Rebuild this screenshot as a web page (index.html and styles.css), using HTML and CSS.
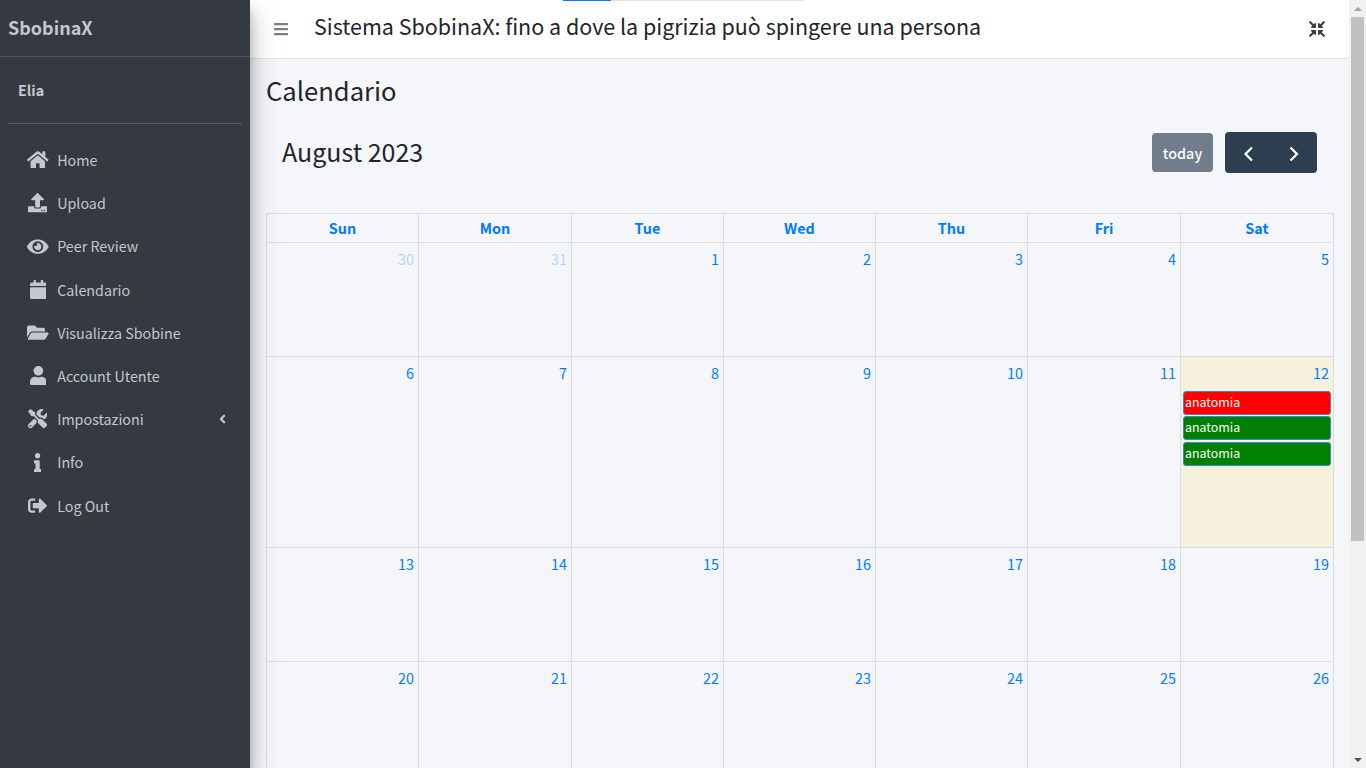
FILE: index.html
```html
<!DOCTYPE html>
<html lang="it">
<head>
    <meta charset="UTF-8">
    <title>Calendario</title>
    <link rel="stylesheet" href="styles.css">
</head>
<body>
    <div class="progress"><span class="progress-done"></span><span class="progress-rest"></span></div>

    <!-- Sidebar -->
    <aside class="sidebar">
        <div class="brand">SbobinaX</div>
        <div class="sidebar-inner">
            <div class="user-panel">Elia</div>
            <ul class="nav">
                <li><a class="nav-link"><span class="nav-icon"><svg viewBox="0 0 576 512"><path d="M280.37 148.26L96 300.11V464a16 16 0 0 0 16 16l112.06-.29a16 16 0 0 0 15.92-16V368a16 16 0 0 1 16-16h64a16 16 0 0 1 16 16v95.64a16 16 0 0 0 16 16.05L464 480a16 16 0 0 0 16-16V300L295.67 148.26a12.19 12.19 0 0 0-15.3 0zM571.6 251.47L488 182.56V44.05a12 12 0 0 0-12-12h-56a12 12 0 0 0-12 12v72.61L318.47 43a48 48 0 0 0-61 0L4.34 251.47a12 12 0 0 0-1.6 16.9l25.5 31A12 12 0 0 0 45.15 301l235.22-193.74a12.19 12.19 0 0 1 15.3 0L530.9 301a12 12 0 0 0 16.9-1.6l25.5-31a12 12 0 0 0-1.7-16.93z"/></svg></span>Home</a></li>
                <li><a class="nav-link"><span class="nav-icon"><svg viewBox="0 0 512 512"><path d="M296 384h-80c-13.3 0-24-10.7-24-24V192h-87.7c-17.8 0-26.7-21.5-14.1-34.1L242.3 5.7c7.5-7.5 19.8-7.5 27.3 0l152.2 152.2c12.6 12.6 3.7 34.1-14.1 34.1H320v168c0 13.3-10.7 24-24 24zm216-8v112c0 13.3-10.7 24-24 24H24c-13.3 0-24-10.7-24-24V376c0-13.3 10.7-24 24-24h136v8c0 30.9 25.1 56 56 56h80c30.9 0 56-25.1 56-56v-8h136c13.3 0 24 10.7 24 24zm-124 88c0-11-9-20-20-20s-20 9-20 20 9 20 20 20 20-9 20-20zm64 0c0-11-9-20-20-20s-20 9-20 20 9 20 20 20 20-9 20-20z"/></svg></span>Upload</a></li>
                <li><a class="nav-link"><span class="nav-icon"><svg viewBox="0 0 576 512"><path d="M572.52 241.4C518.29 135.59 410.93 64 288 64S57.68 135.64 3.48 241.41a32.35 32.35 0 0 0 0 29.19C57.71 376.41 165.07 448 288 448s230.32-71.64 284.52-177.41a32.35 32.35 0 0 0 0-29.19zM288 400a144 144 0 1 1 144-144 143.93 143.93 0 0 1-144 144zm0-240a95.31 95.31 0 0 0-25.31 3.79 47.85 47.85 0 0 1-66.9 66.9A95.78 95.78 0 1 0 288 160z"/></svg></span>Peer Review</a></li>
                <li><a class="nav-link"><span class="nav-icon"><svg viewBox="0 0 448 512"><path d="M12 192h424c6.6 0 12 5.4 12 12v260c0 26.5-21.5 48-48 48H48c-26.5 0-48-21.5-48-48V204c0-6.6 5.4-12 12-12zm436-44v-36c0-26.5-21.5-48-48-48h-48V12c0-6.6-5.4-12-12-12h-40c-6.6 0-12 5.4-12 12v52H160V12c0-6.6-5.4-12-12-12h-40c-6.6 0-12 5.4-12 12v52H48C21.5 64 0 85.5 0 112v36c0 6.6 5.4 12 12 12h424c6.6 0 12-5.4 12-12z"/></svg></span>Calendario</a></li>
                <li><a class="nav-link"><span class="nav-icon"><svg viewBox="0 0 576 512"><path d="M572.694 292.093L500.27 416.248A63.997 63.997 0 0 1 444.989 448H45.025c-18.523 0-30.064-20.093-20.731-36.093l72.424-124.155A64 64 0 0 1 152 256h399.964c18.523 0 30.064 20.093 20.73 36.093zM152 224h328v-48c0-26.51-21.49-48-48-48H272l-64-64H48C21.49 64 0 85.49 0 112v278.046l69.077-118.418C86.214 242.25 117.989 224 152 224z"/></svg></span>Visualizza Sbobine</a></li>
                <li><a class="nav-link"><span class="nav-icon"><svg viewBox="0 0 448 512"><path d="M224 256c70.7 0 128-57.3 128-128S294.7 0 224 0 96 57.3 96 128s57.3 128 128 128zm89.6 32h-16.7c-22.2 10.2-46.9 16-72.9 16s-50.6-5.8-72.9-16h-16.7C60.2 288 0 348.2 0 422.4V464c0 26.5 21.5 48 48 48h352c26.5 0 48-21.5 48-48v-41.6c0-74.2-60.2-134.4-134.4-134.4z"/></svg></span>Account Utente</a></li>
                <li><a class="nav-link"><span class="nav-icon"><svg viewBox="0 0 512 512"><path d="M501.1 395.7L384 278.6c-23.1-23.1-57.6-27.6-85.4-13.9L192 158.1V96L64 0 0 64l96 128h62.1l106.6 106.6c-13.6 27.8-9.2 62.3 13.9 85.4l117.1 117.1c14.6 14.6 38.2 14.6 52.7 0l52.7-52.7c14.5-14.6 14.5-38.2 0-52.7zM331.7 225c28.3 0 54.9 11 74.9 31l19.4 19.4c15.8-6.9 30.8-16.5 43.8-29.5 37.1-37.1 49.7-89.3 37.9-136.7-2.2-9-13.5-12.1-20.1-5.5l-74.4 74.4-67.9-11.3L334 98.9l74.4-74.4c6.6-6.6 3.4-17.9-5.7-20.2-47.4-11.7-99.6.9-136.6 37.9-28.5 28.5-41.9 66.1-41.2 103.6l82.1 82.1c8.1-1.9 16.5-2.9 24.7-2.9zm-103.9 82l-56.7-56.7L18.7 402.8c-25 25-25 65.5 0 90.5s65.5 25 90.5 0l123.6-123.6c-7.6-19.9-9.9-41.6-5-62.7zM64 472c-13.2 0-24-10.8-24-24 0-13.3 10.7-24 24-24s24 10.7 24 24c0 13.2-10.7 24-24 24z"/></svg></span>Impostazioni<svg class="nav-arrow" viewBox="0 0 256 512"><path d="M31.7 239l136-136c9.4-9.4 24.6-9.4 33.9 0l22.6 22.6c9.4 9.4 9.4 24.6 0 33.9L127.9 256l96.4 96.4c9.4 9.4 9.4 24.6 0 33.9L201.7 413c-9.4 9.4-24.6 9.4-33.9 0l-136-136c-9.5-9.4-9.5-24.6-.1-34z"/></svg></a></li>
                <li><a class="nav-link"><span class="nav-icon"><svg viewBox="0 0 192 512"><path d="M20 424.229h20V279.771H20c-11.046 0-20-8.954-20-20V212c0-11.046 8.954-20 20-20h112c11.046 0 20 8.954 20 20v212.229h20c11.046 0 20 8.954 20 20V492c0 11.046-8.954 20-20 20H20c-11.046 0-20-8.954-20-20v-47.771c0-11.046 8.954-20 20-20zM96 0C56.235 0 24 32.235 24 72s32.235 72 72 72 72-32.235 72-72S135.764 0 96 0z"/></svg></span>Info</a></li>
                <li><a class="nav-link"><span class="nav-icon"><svg viewBox="0 0 512 512"><path d="M497 273L329 441c-15 15-41 4.5-41-17v-96H152c-13.3 0-24-10.7-24-24v-96c0-13.3 10.7-24 24-24h136V88c0-21.4 25.9-32 41-17l168 168c9.3 9.4 9.3 24.6 0 34zM192 436v-40c0-6.6-5.4-12-12-12H96c-17.7 0-32-14.3-32-32V160c0-17.7 14.3-32 32-32h84c6.6 0 12-5.4 12-12V76c0-6.6-5.4-12-12-12H96c-53 0-96 43-96 96v192c0 53 43 96 96 96h84c6.6 0 12-5.4 12-12z"/></svg></span>Log Out</a></li>
            </ul>
        </div>
    </aside>

    <div class="main">
        <!-- Barra in alto -->
        <header class="topbar">
            <svg class="burger" viewBox="0 0 448 512"><path d="M16 132h416c8.837 0 16-7.163 16-16V76c0-8.837-7.163-16-16-16H16C7.163 60 0 67.163 0 76v40c0 8.837 7.163 16 16 16zm0 160h416c8.837 0 16-7.163 16-16v-40c0-8.837-7.163-16-16-16H16c-8.837 0-16 7.163-16 16v40c0 8.837 7.163 16 16 16zm0 160h416c8.837 0 16-7.163 16-16v-40c0-8.837-7.163-16-16-16H16c-8.837 0-16 7.163-16 16v40c0 8.837 7.163 16 16 16z"/></svg>
            <div class="topbar-title">Sistema SbobinaX: fino a dove la pigrizia può spingere una persona</div>
            <svg class="compress" viewBox="0 0 512 512"><path d="M200 288H88c-21.4 0-32.1 25.8-17 41l32.9 31-99.2 99.3c-6.2 6.2-6.2 16.4 0 22.6l25.4 25.4c6.2 6.2 16.4 6.2 22.6 0L152 408l31.1 33c15.1 15.1 40.9 4.4 40.9-17V312c0-13.3-10.7-24-24-24zm112-64h112c21.4 0 32.1-25.9 17-41l-33-31 99.3-99.3c6.2-6.2 6.2-16.4 0-22.6L481.9 4.7c-6.2-6.2-16.4-6.2-22.6 0L360 104l-31.1-33C313.8 55.9 288 66.6 288 88v112c0 13.3 10.7 24 24 24zm96 136l33-31.1c15.1-15.1 4.4-40.9-17-40.9H312c-13.3 0-24 10.7-24 24v112c0 21.4 25.9 32.1 41 17l31-32.9 99.3 99.3c6.2 6.2 16.4 6.2 22.6 0l25.4-25.4c6.2-6.2 6.2-16.4 0-22.6L408 360zM183 71.1L152 104 52.7 4.7c-6.2-6.2-16.4-6.2-22.6 0L4.7 30.1c-6.2 6.2-6.2 16.4 0 22.6L104 152l-33 31.1C55.9 198.2 66.6 224 88 224h112c13.3 0 24-10.7 24-24V88c0-21.3-25.9-32-41-16.9z"/></svg>
        </header>

        <main class="content">
            <h1 class="page-title">Calendario</h1>

            <div class="toolbar">
                <h2 class="month">August 2023</h2>
                <button class="btn-today">today</button>
                <div class="btn-group">
                    <button class="btn-nav"><svg viewBox="0 0 16 16"><polyline points="12,2.5 5.5,9 12,15.5"/></svg></button>
                    <button class="btn-nav"><svg viewBox="0 0 16 16"><polyline points="4.5,2.5 11,9 4.5,15.5"/></svg></button>
                </div>
            </div>

            <!-- Calendario -->
            <table class="calendar">
                <thead>
                    <tr><th>Sun</th><th class="col-wide">Mon</th><th>Tue</th><th>Wed</th><th>Thu</th><th class="col-wide">Fri</th><th class="col-wide">Sat</th></tr>
                </thead>
                <tbody>
                    <tr class="week">
                        <td class="other-month">30</td><td class="other-month">31</td><td>1</td><td>2</td><td>3</td><td>4</td><td>5</td>
                    </tr>
                    <tr class="week week-tall">
                        <td>6</td><td>7</td><td>8</td><td>9</td><td>10</td><td>11</td>
                        <td class="today">12
                            <div class="event event-red">anatomia</div>
                            <div class="event event-green">anatomia</div>
                            <div class="event event-green">anatomia</div>
                        </td>
                    </tr>
                    <tr class="week">
                        <td>13</td><td>14</td><td>15</td><td>16</td><td>17</td><td>18</td><td>19</td>
                    </tr>
                    <tr class="week">
                        <td>20</td><td>21</td><td>22</td><td>23</td><td>24</td><td>25</td><td>26</td>
                    </tr>
                </tbody>
            </table>
        </main>
    </div>

    <!-- Barra di scorrimento -->
    <div class="scrollbar">
        <span class="arrow-up"></span>
        <span class="thumb"></span>
        <span class="track"></span>
        <span class="arrow-down"></span>
    </div>
</body>
</html>
```

FILE: styles.css
```css
* {
    box-sizing: border-box;
}
html, body {
    height: 100%;
    margin: 0;
    overflow: hidden;
}
body {
    display: flex;
    font-family: "Noto Sans CJK SC", "Noto Sans", sans-serif;
    font-size: 14.3px;
    line-height: 1.5;
    color: #212529;
    background-color: #f4f6f9;
}

/* progress in alto */
.progress {
    position: absolute;
    top: 0;
    left: 563px;
    width: 241px;
    height: 1px;
    display: flex;
    z-index: 5;
}
.progress-done {
    width: 48px;
    background-color: #007bff;
}
.progress-rest {
    flex: 1;
    background-color: #e2e2e2;
}

/* sidebar */
.sidebar {
    width: 250px;
    flex-shrink: 0;
    background-color: #343a40;
    color: #c2c7d0;
    box-shadow: 0 14px 28px rgba(0, 0, 0, .25), 0 10px 10px rgba(0, 0, 0, .22);
    z-index: 2;
}
.brand {
    height: 57px;
    padding: 12px 8px 0;
    font-size: 18px;
    font-weight: 700;
    line-height: 30px;
    border-bottom: 1px solid #4b545c;
}
.sidebar-inner {
    padding: 0 8px;
}
.user-panel {
    height: 67px;
    padding: 22px 10px 0;
    font-weight: 700;
    border-bottom: 1px solid #4f5962;
}
.nav {
    list-style: none;
    margin: 0;
    padding: 15.8px 0 0;
}
.nav li {
    margin-bottom: 3.2px;
}
.nav-link {
    display: flex;
    align-items: center;
    height: 40px;
    padding: 0 16px;
}
.nav-icon {
    width: 25.6px;
    margin: 0 6.5px 0 1.1px;
    display: flex;
    justify-content: center;
}
.nav-icon svg {
    height: 19.2px;
    fill: currentColor;
}
.nav-arrow {
    height: 14px;
    margin-left: auto;
    fill: currentColor;
}

/* parte destra */
.main {
    flex: 1;
    min-width: 0;
}
.topbar {
    height: 59px;
    display: flex;
    align-items: center;
    padding: 0 24px;
    background-color: #fff;
    border-bottom: 1px solid #dee2e6;
}
.burger {
    height: 16px;
    fill: rgba(0, 0, 0, .5);
}
.topbar-title {
    margin: 0 0 5px 26px;
    font-size: 21.48px;
    color: #212529;
}
.compress {
    height: 16px;
    margin-left: auto;
    fill: #3a3f45;
}
.content {
    padding: 14px 16px 0;
}
.page-title {
    margin: 0;
    font-size: 25.6px;
    font-weight: 400;
    line-height: 34px;
}
.toolbar {
    display: flex;
    align-items: center;
    height: 41px;
    margin-top: 25px;
    padding: 0 16px;
}
.month {
    margin: 0 auto 1px 0;
    font-size: 25px;
    font-weight: 400;
}
.btn-today, .btn-nav {
    border: 0;
    color: #fff;
    background-color: #2c3e50;
    font-family: inherit;
    font-size: 14.4px;
}
.btn-today {
    width: 61px;
    height: 39px;
    border-radius: 4px;
    opacity: .65;
    font-weight: 500;
}
.btn-group {
    display: flex;
    margin-left: 12px;
}
.btn-nav {
    width: 46px;
    height: 41px;
    padding: 0;
    display: flex;
    align-items: center;
    justify-content: center;
}
.btn-nav:first-child {
    border-radius: 4px 0 0 4px;
}
.btn-nav:last-child {
    border-radius: 0 4px 4px 0;
}
.btn-nav svg {
    width: 16px;
    height: 16px;
    fill: none;
    stroke: #fff;
    stroke-width: 2.2;
    overflow: visible;
}

/* calendario */
.calendar {
    width: 1067px;
    margin-top: 40px;
    border-collapse: collapse;
    table-layout: fixed;
}
.calendar th, .calendar td {
    border: 1px solid #ddd;
    color: #007bff;
}
.calendar th {
    width: 152px;
    height: 29px;
    padding: 0;
    font-size: 14.4px;
    font-weight: 700;
}
.calendar .col-wide {
    width: 153px;
}
.calendar td {
    padding: 5px 4px 0;
    font-size: 14.4px;
    text-align: right;
    vertical-align: top;
}
.week {
    height: 114px;
}
.week-tall {
    height: 191px;
}
.calendar .other-month {
    color: rgba(0, 123, 255, .3);
}
.calendar .today {
    padding-left: 2px;
    background-color: #f6f1dc;
}
.event {
    height: 24px;
    margin: 7px -2px 1.5px 0;
    padding-left: 1px;
    border: 1px solid #3788d8;
    border-radius: 3px;
    color: #fff;
    font-size: 12.4px;
    line-height: 20px;
    text-align: left;
}
.event-red {
    background-color: #f00;
}
.event-green {
    background-color: #008000;
    margin-top: 0;
}

/* scrollbar disegnata */
.scrollbar {
    width: 17px;
    flex-shrink: 0;
    display: flex;
    flex-direction: column;
    align-items: center;
    background-color: #f1f1f1;
}
.arrow-up, .arrow-down {
    height: 17px;
    width: 17px;
    display: flex;
    justify-content: center;
    align-items: center;
}
.arrow-up::before {
    content: "";
    border: 4px solid transparent;
    border-top: 0;
    border-bottom: 4px solid #a3a3a3;
}
.arrow-down::before {
    content: "";
    border: 4px solid transparent;
    border-bottom: 0;
    border-top: 4px solid #505050;
}
.thumb {
    width: 13px;
    height: 524px;
    background-color: #c1c1c1;
}
.track {
    flex: 1;
}
```
